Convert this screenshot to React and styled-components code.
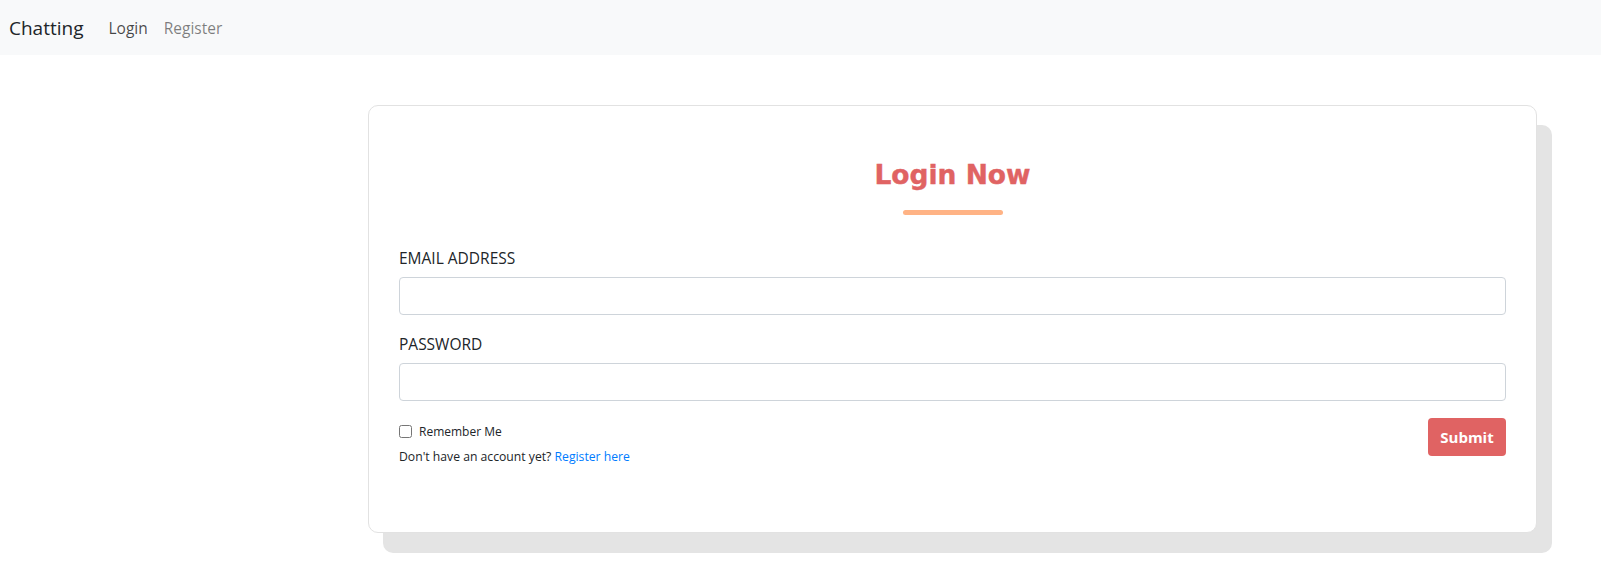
import React from 'react';
import styled, { createGlobalStyle } from 'styled-components';

const GlobalStyle = createGlobalStyle`
  body {
    margin: 0;
    background: #fff;
    font-family: "Open Sans", "Noto Sans", sans-serif;
    color: #212529;
  }
  * { box-sizing: border-box; }
`;

const Navbar = styled.nav`
  display: flex;
  align-items: center;
  height: 55px;
  padding: 0 9px;
  background: #f8f9fa;
`;

const Brand = styled.a`
  font-size: 19px;
  color: #212529;
  margin-right: 25px;
  text-decoration: none;
`;

const NavLink = styled.a`
  font-size: 15.5px;
  margin-right: 16px;
  text-decoration: none;
  color: ${({ $active }) => ($active ? 'rgba(0,0,0,0.72)' : 'rgba(0,0,0,0.5)')};
`;

const Main = styled.main`
  padding: 50px 0 40px 368px;
`;

const Card = styled.div`
  width: 1169px;
  min-height: 428px;
  padding: 49px 30px 30px;
  background: #fff;
  border: 1px solid #e2e2e2;
  border-radius: 10px;
  box-shadow: 15px 20px 0 #e4e4e4;
`;

const Title = styled.h2`
  margin: 0;
  text-align: center;
  font-family: "DejaVu Sans", sans-serif;
  font-weight: 700;
  font-size: 26.5px;
  line-height: 40px;
  color: #e06363;
  -webkit-text-stroke: 0.4px #e06363;
`;

const Underline = styled.div`
  width: 100px;
  height: 5px;
  margin: 15px auto 32px;
  border-radius: 3px;
  background: #ffb385;
`;

const Field = styled.div`
  margin-bottom: 18px;
`;

const Label = styled.label`
  display: block;
  font-size: 15.5px;
  line-height: 22px;
  margin-bottom: 8px;
  color: #212529;
`;

const Input = styled.input`
  display: block;
  width: 100%;
  height: 38px;
  border: 1px solid #ced4da;
  border-radius: 4px;
  font-size: 16px;
  padding: 6px 12px;
`;

const Footer = styled.div`
  display: flex;
  justify-content: space-between;
  align-items: flex-start;
`;

const Check = styled.label`
  display: flex;
  align-items: center;
  font-size: 12px;
  margin: 4px 0 8px;
  input {
    width: 13px;
    height: 13px;
    margin: 0 7px 0 0;
  }
`;

const Small = styled.div`
  font-size: 12.2px;
  a {
    color: #007bff;
    text-decoration: none;
  }
`;

const Submit = styled.button`
  width: 78px;
  height: 38px;
  margin-top: -1px;
  border: none;
  border-radius: 4px;
  background: #e06363;
  color: #fff;
  font-family: "Open Sans", sans-serif;
  font-weight: 700;
  font-size: 15px;
`;

export default function App() {
  return (
    <>
      <GlobalStyle />
      <Navbar>
        <Brand href="#">Chatting</Brand>
        <NavLink href="#" $active>Login</NavLink>
        <NavLink href="#">Register</NavLink>
      </Navbar>
      <Main>
        <Card>
          <Title>Login Now</Title>
          <Underline />
          <Field>
            <Label>EMAIL ADDRESS</Label>
            <Input type="email" />
          </Field>
          <Field>
            <Label>PASSWORD</Label>
            <Input type="password" />
          </Field>
          <Footer>
            <div>
              <Check>
                <input type="checkbox" />
                Remember Me
              </Check>
              <Small>
                Don't have an account yet? <a href="#">Register here</a>
              </Small>
            </div>
            <Submit>Submit</Submit>
          </Footer>
        </Card>
      </Main>
    </>
  );
}
